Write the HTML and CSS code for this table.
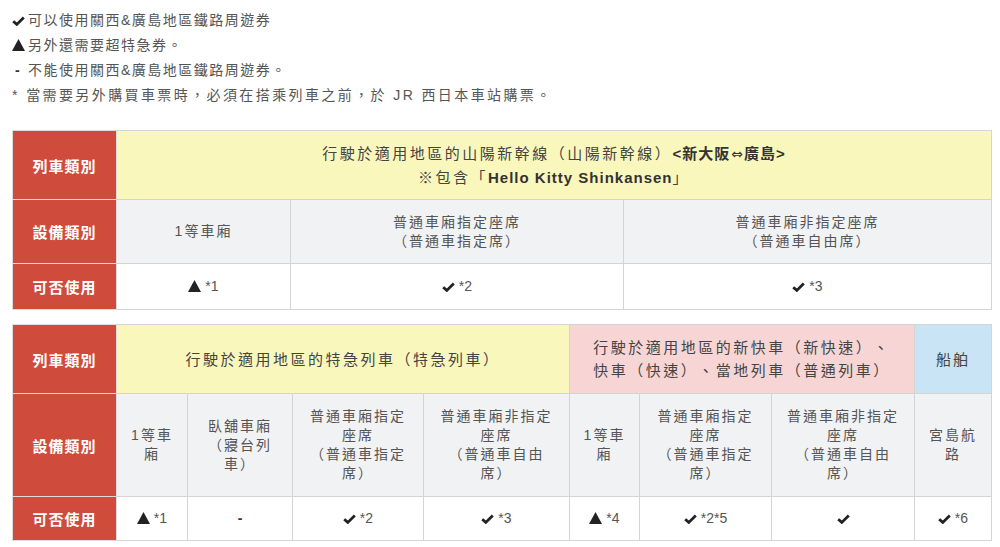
FILE: index.html
```html
<!DOCTYPE html>
<html lang="zh-Hant">
<head>
<meta charset="utf-8">
<title>關西&amp;廣島地區鐵路周遊券</title>
<link rel="stylesheet" href="styles.css">
</head>
<body>
<ul class="legend">
  <li><span class="mark"><svg class="ico-check" viewBox="0 0 13 10" width="13" height="10"><path d="M1.2 5.2 L4.8 8.4 L11.8 1.6" fill="none" stroke="#222" stroke-width="2.8"/></svg></span>可以使用關西&amp;廣島地區鐵路周遊券</li>
  <li><span class="mark"><svg class="ico-tri" viewBox="0 0 12 11" width="13" height="12"><path d="M6 0 L12 11 L0 11 Z" fill="#222"/></svg></span>另外還需要超特急券。</li>
  <li><span class="mark dash">-</span>不能使用關西&amp;廣島地區鐵路周遊券。</li>
  <li class="note">* 當需要另外購買車票時，必須在搭乘列車之前，於 JR 西日本車站購票。</li>
</ul>

<table class="pass t1">
  <colgroup>
    <col class="c-head"><col style="width:174px"><col style="width:333px"><col>
  </colgroup>
  <tr class="r-type">
    <th>列車類別</th>
    <td colspan="3" class="yellow">行駛於適用地區的山陽新幹線（山陽新幹線）<b>&lt;新大阪<span class="arrow">⇔</span>廣島&gt;</b><br>※包含「<b>Hello Kitty Shinkansen</b>」</td>
  </tr>
  <tr class="r-seat">
    <th>設備類別</th>
    <td>1等車廂</td>
    <td>普通車廂指定座席<br>（普通車指定席）</td>
    <td>普通車廂非指定座席<br>（普通車自由席）</td>
  </tr>
  <tr class="r-use">
    <th>可否使用</th>
    <td><svg class="ico-tri" viewBox="0 0 12 11" width="13" height="12"><path d="M6 0 L12 11 L0 11 Z" fill="#222"/></svg> *1</td>
    <td><svg class="ico-check" viewBox="0 0 13 10" width="13" height="10"><path d="M1.2 5.2 L4.8 8.4 L11.8 1.6" fill="none" stroke="#222" stroke-width="2.8"/></svg> *2</td>
    <td><svg class="ico-check" viewBox="0 0 13 10" width="13" height="10"><path d="M1.2 5.2 L4.8 8.4 L11.8 1.6" fill="none" stroke="#222" stroke-width="2.8"/></svg> *3</td>
  </tr>
</table>

<table class="pass t2">
  <colgroup>
    <col class="c-head">
    <col style="width:71px"><col style="width:105px"><col style="width:131px"><col style="width:146px">
    <col style="width:70px"><col style="width:132px"><col style="width:143px"><col>
  </colgroup>
  <tr class="r-type2">
    <th>列車類別</th>
    <td colspan="4" class="yellow">行駛於適用地區的特急列車（特急列車）</td>
    <td colspan="3" class="pink">行駛於適用地區的新快車（新快速）、<br>快車（快速）、當地列車（普通列車）</td>
    <td class="blue">船舶</td>
  </tr>
  <tr class="r-seat2">
    <th>設備類別</th>
    <td>1等車廂</td>
    <td>臥舖車廂<br>（寢台列車）</td>
    <td>普通車廂指定座席<br>（普通車指定席）</td>
    <td>普通車廂非指定座席<br>（普通車自由席）</td>
    <td>1等車廂</td>
    <td>普通車廂指定座席<br>（普通車指定席）</td>
    <td>普通車廂非指定座席<br>（普通車自由席）</td>
    <td>宮島航路</td>
  </tr>
  <tr class="r-use r-use2">
    <th>可否使用</th>
    <td><svg class="ico-tri" viewBox="0 0 12 11" width="13" height="12"><path d="M6 0 L12 11 L0 11 Z" fill="#222"/></svg> *1</td>
    <td><span class="dash">-</span></td>
    <td><svg class="ico-check" viewBox="0 0 13 10" width="13" height="10"><path d="M1.2 5.2 L4.8 8.4 L11.8 1.6" fill="none" stroke="#222" stroke-width="2.8"/></svg> *2</td>
    <td><svg class="ico-check" viewBox="0 0 13 10" width="13" height="10"><path d="M1.2 5.2 L4.8 8.4 L11.8 1.6" fill="none" stroke="#222" stroke-width="2.8"/></svg> *3</td>
    <td><svg class="ico-tri" viewBox="0 0 12 11" width="13" height="12"><path d="M6 0 L12 11 L0 11 Z" fill="#222"/></svg> *4</td>
    <td><svg class="ico-check" viewBox="0 0 13 10" width="13" height="10"><path d="M1.2 5.2 L4.8 8.4 L11.8 1.6" fill="none" stroke="#222" stroke-width="2.8"/></svg> *2*5</td>
    <td><svg class="ico-check" viewBox="0 0 13 10" width="13" height="10"><path d="M1.2 5.2 L4.8 8.4 L11.8 1.6" fill="none" stroke="#222" stroke-width="2.8"/></svg></td>
    <td><svg class="ico-check" viewBox="0 0 13 10" width="13" height="10"><path d="M1.2 5.2 L4.8 8.4 L11.8 1.6" fill="none" stroke="#222" stroke-width="2.8"/></svg> *6</td>
  </tr>
</table>
</body>
</html>
```

FILE: styles.css
```css
* { box-sizing: border-box; }

body {
  margin: 8px 8px 0 12px;
  background: #fff;
  color: #555;
  font-family: "Liberation Sans", "Noto Sans CJK TC", sans-serif;
  font-size: 14px;
  text-spacing-trim: space-all;
}

.legend {
  list-style: none;
  margin: 0;
  padding: 0;
  line-height: 25px;
  letter-spacing: 1.5px;
  color: #555;
}

.legend .note {
  letter-spacing: 2.4px;
}

.legend .mark {
  display: inline-block;
  width: 16px;
  letter-spacing: 0;
}

.legend .dash {
  padding-left: 3px;
}

.dash {
  font-weight: bold;
  color: #333;
}

.ico-check, .ico-tri {
  vertical-align: -1px;
}

.pass {
  width: 980px;
  table-layout: fixed;
  border-collapse: collapse;
  text-align: center;
  color: #555;
  letter-spacing: 2px;
}

.t1 { margin-top: 22px; }
.t2 { margin-top: 14px; }

.c-head { width: 104px; }

.pass th,
.pass td {
  border: 1px solid #d4d4d4;
  padding: 0 11px;
  vertical-align: middle;
  font-weight: normal;
}

.pass th {
  background: #cf4c3d;
  color: #fff;
  font-weight: bold;
  font-size: 15px;
  letter-spacing: 1px;
  border-color: #dcdcdc;
}

.pass td {
  background: #f1f2f4;
  line-height: 19px;
}

.pass td.yellow,
.pass td.pink,
.pass td.blue {
  font-size: 15px;
  line-height: 23px;
  letter-spacing: 2.5px;
  color: #444;
}

.pass td.yellow { background: #faf7bd; }
.pass td.pink { background: #f8d5d5; }
.pass td.blue { background: #c8e4f5; letter-spacing: 2px; }

.pass td b {
  color: #333;
  letter-spacing: 1px;
}

.arrow {
  font-family: "DejaVu Sans", sans-serif;
  font-weight: normal;
  font-size: 14px;
  letter-spacing: 0;
  padding: 0 1px;
}

.r-type th, .r-type td { height: 69px; }
.r-seat th, .r-seat td { height: 64px; }
.r-type2 th, .r-type2 td { height: 69px; }
.r-seat2 th, .r-seat2 td { height: 103px; }

.pass .r-use td {
  background: #fff;
  height: 46px;
  letter-spacing: 0;
}

.pass .r-use th { height: 46px; }

.pass .r-use2 td,
.pass .r-use2 th { height: 44px; }
```
